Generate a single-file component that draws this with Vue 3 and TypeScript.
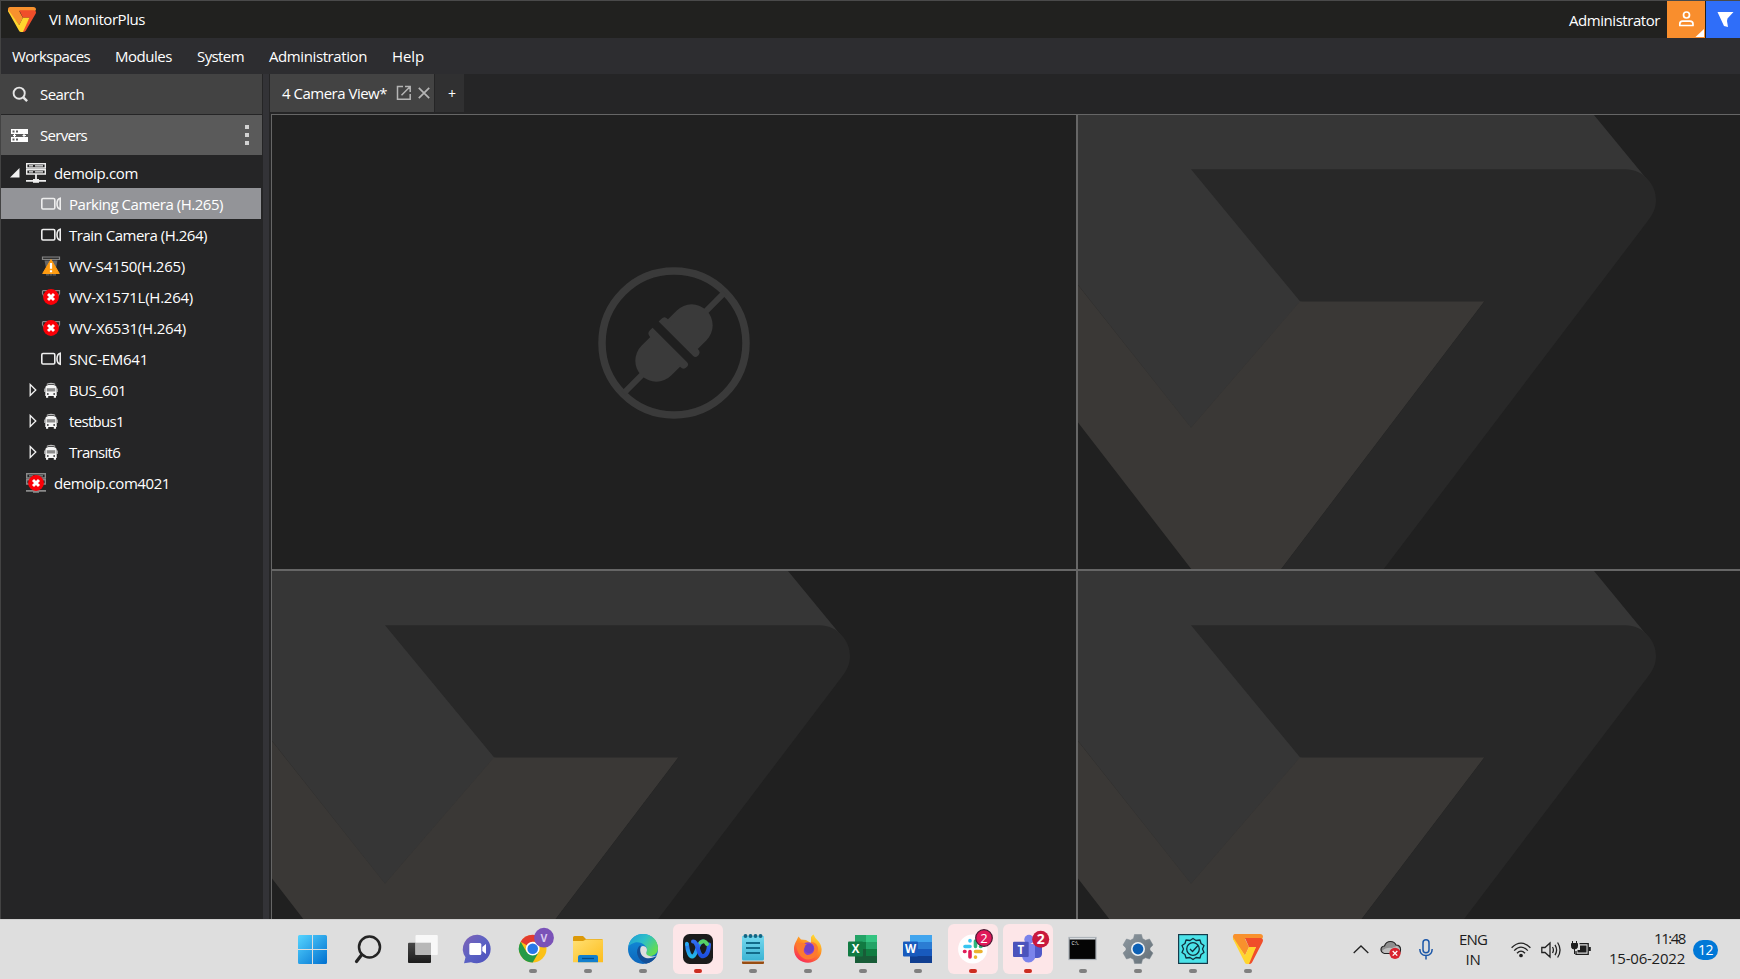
<script setup lang="ts">
interface TreeNode {
  label: string
  width: number
  icon: 'server' | 'camera' | 'warning' | 'error' | 'bus' | 'serverError'
  level: 0 | 1
  arrow?: 'open' | 'closed'
  selected?: boolean
}

interface TaskItem {
  name: string
  running?: boolean
  alert?: boolean
}

const menus = [
  { label: 'Workspaces', width: 78 },
  { label: 'Modules', width: 57 },
  { label: 'System', width: 47 },
  { label: 'Administration', width: 98 },
  { label: 'Help', width: 32 },
]

const nodes: TreeNode[] = [
  { label: 'demoip.com', width: 84, icon: 'server', level: 0, arrow: 'open' },
  { label: 'Parking Camera (H.265)', width: 154, icon: 'camera', level: 1, selected: true },
  { label: 'Train Camera (H.264)', width: 138, icon: 'camera', level: 1 },
  { label: 'WV-S4150(H.265)', width: 116, icon: 'warning', level: 1 },
  { label: 'WV-X1571L(H.264)', width: 124, icon: 'error', level: 1 },
  { label: 'WV-X6531(H.264)', width: 117, icon: 'error', level: 1 },
  { label: 'SNC-EM641', width: 79, icon: 'camera', level: 1 },
  { label: 'BUS_601', width: 57, icon: 'bus', level: 1, arrow: 'closed' },
  { label: 'testbus1', width: 55, icon: 'bus', level: 1, arrow: 'closed' },
  { label: 'Transit6', width: 51, icon: 'bus', level: 1, arrow: 'closed' },
  { label: 'demoip.com4021', width: 116, icon: 'serverError', level: 0 },
]

const tasks: TaskItem[] = [
  { name: 'start' },
  { name: 'search' },
  { name: 'taskview' },
  { name: 'chat' },
  { name: 'chrome', running: true },
  { name: 'explorer', running: true },
  { name: 'edge', running: true },
  { name: 'webex', running: true, alert: true },
  { name: 'notepad', running: true },
  { name: 'firefox', running: true },
  { name: 'excel', running: true },
  { name: 'word', running: true },
  { name: 'slack', running: true, alert: true },
  { name: 'teams', running: true, alert: true },
  { name: 'terminal', running: true },
  { name: 'settings', running: true },
  { name: 'license', running: true },
  { name: 'monitor', running: true },
]

const cells = ['disconnected', 'empty', 'empty', 'empty']

// Tracks a label so that its run of text fills the given width.
const vFit = {
  mounted(el: HTMLElement, binding: { value: number }) {
    const natural = el.getBoundingClientRect().width
    const count = (el.textContent ?? '').trim().length
    if (count > 1) el.style.letterSpacing = `${(binding.value - natural) / count}px`
  },
}
</script>

<template>
  <div class="screen">
    <div class="app">
      <header class="titlebar">
        <svg class="brand" viewBox="0 0 30 30" preserveAspectRatio="none">
          <path d="M2 0H27Q30 0 30 3L29 5H12L16 13 12 21.500 0 5Q-.5 0 2 0Z" fill="#f8912d" />
          <path d="M12 4H27.500Q31 4.500 29.600 8L19 28.500Q18 30 16 30L14 29 23 13H16Z" fill="#f04e2a" />
          <path d="M0 3L12 21.500 16 13H23L16 30H14Q12.500 30 11.800 28.500L.5 6Z" fill="#ffd52e" />
        </svg>
        <span v-fit="96" class="app-name">VI MonitorPlus</span>
        <span v-fit="91" class="user-name">Administrator</span>
        <button class="user-btn">
          <svg viewBox="0 0 38 37">
            <circle cx="19.500" cy="14" r="3" fill="none" stroke="#fff" stroke-width="1.700" />
            <path d="M12.800 24.500V23Q12.800 20.200 15.600 20.200H23Q26 20.200 26 23V24.500Z" fill="none" stroke="#fff" stroke-width="1.700" stroke-linejoin="round" />
            <path d="M37 28V36H28.500Z" fill="#fff" />
          </svg>
        </button>
        <button class="flag-btn">
          <svg viewBox="0 0 34 37"><path d="M11.500 11H27.500L21.500 17.500 21 20 22 26 18 25Z" fill="#fff" /></svg>
        </button>
      </header>

      <nav class="menubar">
        <div v-for="m in menus" :key="m.label" class="menu"><span v-fit="m.width">{{ m.label }}</span></div>
      </nav>

      <div class="body">
        <aside class="sidebar">
          <div class="search">
            <svg viewBox="0 0 18 18">
              <circle cx="7.600" cy="7.600" r="5.900" fill="none" stroke="#e6e6e6" stroke-width="2" />
              <path d="M12 12L16 16" stroke="#e6e6e6" stroke-width="2.600" />
            </svg>
            <span v-fit="44">Search</span>
          </div>
          <div class="servers">
            <svg viewBox="0 0 17 15">
              <path d="M0 1H17V6H0ZM0 9H17V14H0Z" fill="#fff" />
              <path d="M1.500 2.500H3.500V4.500H1.500ZM5 2.500H7V4.500H5ZM1.500 10.500H3.500V12.500H1.500ZM5 10.500H7V12.500H5Z" fill="#5a5a5a" />
              <path d="M3.500 6V9M13 6V9M2 7.500H5M11.500 7.500H15" stroke="#fff" stroke-width="1.200" />
            </svg>
            <span v-fit="47">Servers</span>
            <i class="kebab"><b /><b /><b /></i>
          </div>
          <ul class="tree">
            <li v-for="n in nodes" :key="n.label" class="node" :class="[`level-${n.level}`, { selected: n.selected }]">
              <span class="arrow">
                <svg v-if="n.arrow === 'open'" viewBox="0 0 10 10"><path d="M9.500 0V9.500H0Z" fill="#f2f2f2" /></svg>
                <svg v-else-if="n.arrow === 'closed'" viewBox="0 0 8 14"><path d="M1.200 1.500L6.800 7 1.200 12.500Z" fill="none" stroke="#f2f2f2" stroke-width="1.300" /></svg>
              </span>
              <svg class="kind" viewBox="0 0 20 20">
                <g v-if="n.icon === 'camera'" fill="none" stroke="#eee" stroke-width="1.600">
                  <rect x=".8" y="4.500" width="13" height="10.500" rx="1.200" />
                  <path d="M19.200 4.300V15.200Q16 14.500 16 9.800T19.200 4.300Z" />
                </g>
                <g v-else-if="n.icon === 'server' || n.icon === 'serverError'" :opacity="n.icon === 'server' ? 1 : 0.5">
                  <path d="M.7.800H19.300V5H.7ZM.7 6.800H19.300V11H.7Z" fill="none" stroke="#eee" stroke-width="1.400" />
                  <path d="M3 2.900H7M9 2.900H17M3 8.900H7M9 8.900H17" stroke="#eee" stroke-width="1.300" />
                  <path d="M10 11V16M0 17.800H20" stroke="#eee" stroke-width="1.800" />
                  <path d="M7 16H13V19.800H7Z" fill="#eee" />
                </g>
                <g v-else-if="n.icon === 'warning'">
                  <path d="M1.500 1H18.500V3.500H1.500Z" fill="#333" stroke="#858585" stroke-width="1.200" />
                  <path d="M3.500 4.500H16.500L15 12H5Z" fill="#666" />
                  <path d="M5 18.900H15" stroke="#666" stroke-width="1.300" stroke-dasharray="3 .5" />
                  <path d="M10 3.500L18.300 17.500H1.700Z" fill="#ff9c12" stroke="#ff9c12" stroke-linejoin="round" />
                  <path d="M10 7V12.800M10 14.200V16.200" stroke="#fff" stroke-width="2.200" />
                </g>
                <g v-else-if="n.icon === 'error'">
                  <path d="M1.500 3.700H18.500V6.500L16 11M1.500 3.700V6.500L4 11" fill="none" stroke="#8a8a8a" stroke-width="1.200" />
                </g>
                <g v-else-if="n.icon === 'bus'">
                  <path d="M6 4.500Q6.500 3.300 10 3.300T14 4.500" fill="none" stroke="#bbb" stroke-width="1.200" />
                  <path d="M4.300 8Q4.300 4.800 10 4.800T15.700 8V16H15V17.800H12.800V16H7.200V17.800H5V16H4.300Z" fill="#f5f5f5" />
                  <path d="M5.800 8.200H14.200V11.500H5.800Z" fill="#8c8c8c" />
                  <path d="M3.800 8.500V12M16.200 8.500V12" stroke="#ccc" stroke-width="1" />
                  <path d="M6 13.900H7.600M12.400 13.900H14" stroke="#252526" stroke-width="1.500" />
                </g>
                <g v-if="n.icon === 'error' || n.icon === 'serverError'">
                  <circle cx="10" cy="10" r="7.900" fill="#fb0007" />
                  <path d="M7 7L13 13M13 7L7 13" stroke="#fff" stroke-width="2.900" />
                </g>
              </svg>
              <span v-fit="n.width" class="label">{{ n.label }}</span>
            </li>
          </ul>
        </aside>
        <div class="splitter" />
        <main class="workspace">
          <div class="tabs">
            <div class="tab">
              <span v-fit="105">4 Camera View*</span>
              <svg class="popout" viewBox="0 0 16 16" fill="none" stroke="#b5b5b5" stroke-width="1.500">
                <path d="M7 1.500H1.500V14.200H14.200V9M9 1.500H14.200V7M14 1.700L5.500 10.200" />
              </svg>
              <svg class="close" viewBox="0 0 12 12"><path d="M.8.800L11.200 11.200M11.200.800L.8 11.200" stroke="#b5b5b5" stroke-width="1.700" /></svg>
            </div>
            <div class="add">+</div>
          </div>
          <div class="grid">
            <div v-for="(c, i) in cells" :key="i" class="cell">
              <svg v-if="c === 'disconnected'" class="plug" viewBox="0 0 152 152">
                <circle cx="76" cy="76" r="72" fill="#1f1f1f" stroke="#3a3a3a" stroke-width="7.500" />
                <g transform="rotate(45 76 76)" fill="#3a3a3a">
                  <rect x="73" y="5" width="6" height="30" />
                  <rect x="73" y="117" width="6" height="30" />
                  <path d="M55 66V51A21 21 0 0 1 97 51V66Z" />
                  <path d="M55 86V101A21 21 0 0 0 97 101V86Z" />
                  <path d="M50 71.700V68Q50 63.500 54.500 63.500H97.500Q102 63.500 102 68V68.200Q102 71.700 98.500 71.700Z" />
                  <path d="M50 80.300V84Q50 88.500 54.500 88.500H97.500Q102 88.500 102 84V83.800Q102 80.300 98.500 80.300Z" />
                </g>
              </svg>
              <svg v-else class="watermark" viewBox="0 0 805 455">
                <path d="M0 0H516L569.500 65 540 80 222 187 113 313 0 170Z" fill="#363636" />
                <path d="M0 170L113 312.500 222 186.300H406.500L202.500 455H114L0 307.500Z" fill="#3a3836" />
                <path d="M113 54.300H547C566 54.300 578 70 578 85 578 93 575 99 570.500 105L305 455H202.500L406.500 186.300H222Z" fill="#282828" />
              </svg>
            </div>
          </div>
        </main>
      </div>
    </div>

    <footer class="taskbar">
      <div class="tasks">
        <div v-for="t in tasks" :key="t.name" class="task" :class="{ alert: t.alert, running: t.running }">
          <svg viewBox="0 0 50 50">
            <defs v-if="t.name === 'start'">
              <linearGradient id="gWin" gradientUnits="userSpaceOnUse" x1="11" y1="11" x2="39" y2="40"><stop offset="0" stop-color="#55d4ff" /><stop offset="1" stop-color="#0070d0" /></linearGradient>
              <linearGradient id="gDark" x1="0" y1="0" x2="0" y2="1"><stop offset="0" stop-color="#484848" /><stop offset="1" stop-color="#1c1c1c" /></linearGradient>
              <linearGradient id="gChat" x1="0" y1="0" x2="1" y2="1"><stop offset="0" stop-color="#8262b5" /><stop offset=".5" stop-color="#5b62c4" /><stop offset="1" stop-color="#4d50bc" /></linearGradient>
              <linearGradient id="gFold" x1="0" y1="0" x2="1" y2="1"><stop offset="0" stop-color="#ffe073" /><stop offset="1" stop-color="#fdbd1c" /></linearGradient>
              <linearGradient id="gEdge" x1="0" y1="0" x2="1" y2=".6"><stop offset="0" stop-color="#1d9bd8" /><stop offset=".5" stop-color="#2dbfc8" /><stop offset="1" stop-color="#63dc52" /></linearGradient>
              <linearGradient id="gEdgeB" x1="0" y1="0" x2="0" y2="1"><stop offset="0" stop-color="#1291dc" /><stop offset="1" stop-color="#0d65bb" /></linearGradient>
              <linearGradient id="gNote" x1="0" y1="0" x2="0" y2="1"><stop offset="0" stop-color="#75d8ee" /><stop offset="1" stop-color="#3bb4d4" /></linearGradient>
              <linearGradient id="gFox" x1=".8" y1="0" x2=".2" y2="1"><stop offset="0" stop-color="#ffe434" /><stop offset=".45" stop-color="#ff8a21" /><stop offset="1" stop-color="#f8235e" /></linearGradient>
              <linearGradient id="gWebA" x1="0" y1="0" x2="0" y2="1"><stop offset="0" stop-color="#2b62f5" /><stop offset="1" stop-color="#22b7e8" /></linearGradient>
              <linearGradient id="gWebB" x1="0" y1="0" x2="0" y2="1"><stop offset="0" stop-color="#2f6bf0" /><stop offset="1" stop-color="#1d4fe0" /></linearGradient>
              <linearGradient id="gGear" x1="0" y1="0" x2="1" y2="1"><stop offset="0" stop-color="#8d98a0" /><stop offset="1" stop-color="#646f77" /></linearGradient>
            </defs>

            <path v-if="t.name === 'start'" d="M12 11H24.500V25H10.500V12.500Q10.500 11 12 11ZM25.500 11H38Q39.500 11 39.500 12.500V25H25.500ZM10.500 26H24.500V40H12Q10.500 40 10.500 38.500ZM25.500 26H39.500V38.500Q39.500 40 38 40H25.500Z" fill="url(#gWin)" transform="translate(-.5 0)" />
            <g v-else-if="t.name === 'search'" fill="none" stroke="#242424" stroke-linecap="round">
              <circle cx="26.500" cy="23" r="10.500" stroke-width="2.500" />
              <path d="M18.500 31L13.500 37.500" stroke-width="3.200" />
            </g>
            <g v-else-if="t.name === 'taskview'">
              <rect x="10" y="18.700" width="23" height="20.300" rx="1" fill="url(#gDark)" />
              <rect x="17.500" y="11" width="22.300" height="20" rx="1" fill="#f8f8f8" />
              <rect x="17.500" y="18.700" width="15.500" height="12.300" fill="#b8b8b8" />
            </g>
            <g v-else-if="t.name === 'chat'">
              <path d="M24.500 10.700A14.300 14.300 0 1 1 18 38.200L11 39.300 12.500 33.200A14.300 14.300 0 0 1 24.500 10.700Z" fill="url(#gChat)" />
              <rect x="16.300" y="19" width="12" height="12" rx="1.500" fill="#fff" />
              <path d="M29.300 23L33 20V30L29.300 27Z" fill="#fff" />
            </g>
            <g v-else-if="t.name === 'chrome'">
              <circle cx="24.700" cy="24.700" r="13.800" fill="#fbc116" />
              <path d="M24.700 24.700L12.700 17.800A13.800 13.800 0 0 1 36.700 17.800Z" fill="#e33b2e" />
              <path d="M24.700 17.800L36.700 17.800 30.700 28.200Z" fill="#fbc116" />
              <path d="M12.700 17.800A13.800 13.800 0 0 0 24.700 38.500L30.700 28.200 18.700 28.200Z" fill="#249a47" />
              <circle cx="24.700" cy="24.700" r="6.900" fill="#fff" />
              <circle cx="24.700" cy="24.700" r="5.300" fill="#2878e8" />
              <circle cx="36" cy="13.700" r="9.900" fill="#7a52b8" />
              <text x="36" y="17.500" class="glyph bold tint" font-size="10.500">V</text>
            </g>
            <g v-else-if="t.name === 'explorer'">
              <path d="M10 20V13.500Q10 12 11.500 12H20L23 15H38.500Q40 15 40 16.500V20Z" fill="#dc9908" />
              <path d="M10 17H20L23 15.500H40V38.300H10Z" fill="url(#gFold)" />
              <path d="M15 38.300V33Q15 31 17 31H33Q35 31 35 33V38.300Z" fill="#127fcd" />
              <path d="M19 34.500H31" stroke="#074d88" stroke-width="1.300" />
            </g>
            <g v-else-if="t.name === 'edge'">
              <circle cx="25" cy="25" r="15" fill="url(#gEdgeB)" />
              <path d="M10.500 22C12 14 18 10 25 10 34 10 40 16.500 40 24 40 29.500 36 32 32 32 28.500 32 27 30 28.500 28 31 22 23 17 17 18.500Q13 19.500 10.500 22Z" fill="url(#gEdge)" />
              <path d="M22.500 21C16 26 19 36 28 39.700 32.500 39 36.500 36 38.600 32 29 37 21.500 30 22.500 21Z" fill="#134f97" />
              <path d="M28.500 28C30 25 28 22 25 22 21.500 22 21.500 28 24 31.500 28 36 35 34.500 38.500 31.800Q34 33.500 30 31.500 27.500 30 28.500 28Z" fill="#dedede" />
            </g>
            <g v-else-if="t.name === 'webex'">
              <rect x="10" y="10" width="30" height="30" rx="6.500" fill="#1b1b1b" />
              <path d="M14 20.500C14.500 28 17 33.500 20 32.300 24 30.500 24.500 18 29.500 17.500" fill="none" stroke="url(#gWebA)" stroke-width="4" stroke-linecap="round" />
              <path d="M20 17.500C25.500 17.500 24.500 32.300 30 32.300 33.500 32 35.700 27 36 20.500" fill="none" stroke="url(#gWebB)" stroke-width="4" stroke-linecap="round" />
              <path d="M27.500 18.500Q31.500 15.500 34 20" fill="none" stroke="#55d268" stroke-width="4" stroke-linecap="round" />
              <path d="M13.800 20.500V19.500" stroke="#28a9ef" stroke-width="3.600" stroke-linecap="round" />
            </g>
            <g v-else-if="t.name === 'notepad'">
              <path d="M14 37.500H36V39Q36 40 35 40H15Q14 40 14 39Z" fill="#984d12" />
              <path d="M14 12H36V35Q36 36.500 34.500 36.500H15.500Q14 36.500 14 35Z" fill="url(#gNote)" />
              <path d="M17.500 12H34.500" stroke="#126583" stroke-width="4" stroke-dasharray="0 5" stroke-linecap="round" />
              <path d="M18 19H32M18 24H32M18 29H32" stroke="#126b8a" stroke-width="2" />
            </g>
            <g v-else-if="t.name === 'firefox'">
              <path d="M28 13Q30 10 30.500 10.500 32 14.500 36 18 39 22 38.500 27C38 34 32 38.700 25 38.700S11 34 11 25C11 20 13 18 14.500 14.500L15.500 12.500 18 15.500 23 16 28 19Z" fill="url(#gFox)" />
              <circle cx="25" cy="25" r="6.800" fill="#8a42cf" />
              <path d="M13 20Q20 17 24 21L27 22Q25 24.500 21 24.500 20 29 24 31 31 31 31.500 24 31 20 27.500 18 35 18 35 26 34 35 25 35.500 15 35 13 20Z" fill="#fd7930" />
              <circle cx="26" cy="24.500" r="4.600" fill="#7440c4" />
            </g>
            <g v-else-if="t.name === 'excel'">
              <path d="M17 11H28V18H17Z" fill="#23a366" /><path d="M28 11H39V18H28Z" fill="#34c481" />
              <path d="M17 18H28V25H17Z" fill="#117a42" /><path d="M28 18H39V25H28Z" fill="#23a366" />
              <path d="M17 25H28V39H17Z" fill="#185c37" /><path d="M28 25H39V32H28Z" fill="#107c41" /><path d="M28 32H39V39H28Z" fill="#185c37" />
              <rect x="10" y="17.500" width="15" height="15" rx="1" fill="#117a42" />
              <text x="17.500" y="29" class="glyph bold" font-size="11.500">X</text>
            </g>
            <g v-else-if="t.name === 'word'">
              <path d="M17 11H39V18H17Z" fill="#41a5ee" /><path d="M17 18H39V25H17Z" fill="#2b7cd3" />
              <path d="M17 25H39V32H17Z" fill="#185abd" /><path d="M17 32H39V39H17Z" fill="#103f91" />
              <rect x="10" y="17.500" width="15" height="15" rx="1" fill="#185abd" />
              <text x="17.500" y="29" class="glyph bold" font-size="11.500">W</text>
            </g>
            <g v-else-if="t.name === 'slack'">
              <circle cx="24.700" cy="25" r="14.600" fill="#fff" />
              <g fill="none" stroke-width="3.600" stroke-linecap="round">
                <path d="M17 22.500H22M22 16.500V17" stroke="#36c5f0" />
                <path d="M27.500 17V22.500M32.500 22.500H33" stroke="#2eb67d" />
                <path d="M27.500 27.500H33M27.500 33V33.200" stroke="#ecb22e" />
                <path d="M22 27.500V33M16.500 27.500H17" stroke="#e01e5a" />
              </g>
              <circle cx="36" cy="14" r="8.300" fill="#e0195a" stroke="#4b1731" stroke-width="1.200" />
              <text x="36" y="18.600" class="glyph" font-size="13">2</text>
            </g>
            <g v-else-if="t.name === 'teams'">
              <circle cx="26" cy="15.500" r="4.700" fill="#7b83eb" />
              <path d="M19 20H33V30Q32 38.500 25.500 38.500T19 30Z" fill="#7b83eb" />
              <path d="M32 21H39V30Q38.500 34 34.500 34H32Z" fill="#5059c9" />
              <rect x="10" y="17.700" width="15.700" height="15.300" rx="1" fill="#4b53bc" />
              <text x="17.800" y="29.500" class="glyph bold" font-size="11.500">T</text>
              <circle cx="37.700" cy="15.300" r="8.500" fill="#c9183c" />
              <text x="37.700" y="20.200" class="glyph bold" font-size="14">2</text>
            </g>
            <g v-else-if="t.name === 'terminal'">
              <rect x="11" y="13.500" width="27" height="22" fill="#050505" stroke="#a9b0b6" stroke-width="1.200" />
              <path d="M11.500 14.700H37.500" stroke="#d9dde0" stroke-width="1.600" />
              <text x="13.500" y="21" class="glyph start" font-size="5">C:\.</text>
            </g>
            <g v-else-if="t.name === 'settings'">
              <path d="M21.500 10.500H28.500L29.500 14.500 32.500 16.200 36.500 15 40 21 37 24V26L40 29 36.500 35 32.500 33.800 29.500 35.500 28.500 39.500H21.500L20.500 35.500 17.500 33.800 13.500 35 10 29 13 26V24L10 21 13.500 15 17.500 16.200 20.500 14.500Z" fill="url(#gGear)" stroke="#7c878f" stroke-width=".5" stroke-linejoin="round" />
              <circle cx="25" cy="25" r="7" fill="#eef2f5" />
              <circle cx="25" cy="25" r="5.400" fill="#0c60b5" />
            </g>
            <g v-else-if="t.name === 'license'">
              <rect x="10.600" y="10.600" width="28.800" height="28.800" fill="#4be3e9" stroke="#143b4b" stroke-width="1.200" />
              <g fill="none" stroke="#10303e" stroke-width="1.300" stroke-linejoin="round">
                <path d="M25 14.500L28 16.500 32 16 33 19.500 36 21.500 34.500 25 36 28.500 33 30.500 32 34 28 33.500 25 35.500 22 33.500 18 34 17 30.500 14 28.500 15.500 25 14 21.500 17 19.500 18 16 22 16.500Z" />
                <circle cx="25" cy="25" r="6.300" />
                <path d="M22 25L24.500 27.500 30 21.500" />
              </g>
            </g>
            <g v-else transform="translate(10 10)">
              <path d="M2 0H27Q30 0 30 3L29 5H12L16 13 12 21.500 0 5Q-.5 0 2 0Z" fill="#f8912d" />
              <path d="M12 4H27.500Q31 4.500 29.600 8L19 28.500Q18 30 16 30L14 29 23 13H16Z" fill="#f04e2a" />
              <path d="M0 3L12 21.500 16 13H23L16 30H14Q12.500 30 11.800 28.500L.5 6Z" fill="#ffd52e" />
            </g>
          </svg>
        </div>
      </div>

      <div class="tray">
        <svg class="chevron" viewBox="0 0 16 9"><path d="M.7 8L8 1 15.300 8" fill="none" stroke="#222" stroke-width="1.300" /></svg>
        <svg class="cloud" viewBox="0 0 22 20">
          <path d="M4.500 13.500Q1 12.500 1 9.500T4.500 6Q6 1.500 10.500 1.500 14.500 1.500 16 5 20.500 5 20.500 9.500T17 13.500Z" fill="#8f8f8f" stroke="#222" stroke-width="1.200" />
          <path d="M2 11Q6 7 12 8L17 6 20 9V13H4.500Z" fill="#bdbdbd" />
          <circle cx="15" cy="13.300" r="5.600" fill="#d9232e" />
          <path d="M12.700 11L17.300 15.600M17.300 11L12.700 15.600" stroke="#fff" stroke-width="1.300" />
        </svg>
        <svg class="mic" viewBox="0 0 14 21" fill="none" stroke="#1b57a8" stroke-width="1.500">
          <rect x="4" y=".8" width="6" height="13" rx="3" /><path d="M.8 10Q1 16.500 7 16.500T13.200 10M7 16.500V20.500" />
        </svg>
        <div class="lang"><span v-fit="28">ENG</span><span v-fit="15">IN</span></div>
        <svg class="wifi" viewBox="0 0 20 16" fill="none" stroke="#222" stroke-width="1.300">
          <path d="M.6 5.800Q10-3.500 19.400 5.800M3.200 8.600Q10 1.500 16.800 8.600M6 11.300Q10 7 14 11.300" /><circle cx="10" cy="13.500" r="1.200" fill="#222" />
        </svg>
        <svg class="sound" viewBox="0 0 20 18" fill="none" stroke="#222" stroke-width="1.300">
          <path d="M.8 6.500H4L9 2V16L4 11.500H.8ZM11.500 6Q13.300 9 11.500 12M14 3.800Q17.200 9 14 14.200M16.600 1.500Q21.500 9 16.600 16.500" />
        </svg>
        <svg class="battery" viewBox="0 0 20 17">
          <path d="M8.500 3.700H17.200V14.300H5V11" fill="none" stroke="#1d1d1d" stroke-width="1.300" />
          <path d="M9 5.500H15.500V12.500H6.500V10H9ZM17.500 7H19.800V11H17.500Z" fill="#1d1d1d" />
          <path d="M.5 3.500H6.500V6.500Q6.500 8.800 3.500 9T.5 6.500ZM1.500 1V4M5.500 1V4M3.500 8V14" fill="#1d1d1d" stroke="#1d1d1d" />
        </svg>
        <div class="clock"><span v-fit="31">11:48</span><span v-fit="76">15-06-2022</span></div>
        <span class="count">12</span>
      </div>
    </footer>
  </div>
</template>

<style>
body {
  margin: 0;
  background: #252526;
}
</style>

<style scoped>
.screen {
  width: 1740px;
  height: 979px;
  display: flex;
  flex-direction: column;
  overflow: hidden;
  font-family: "Open Sans", "Noto Sans", sans-serif;
  font-size: 15px;
  line-height: 20px;
  color: #fff;
}
.screen svg { display: block; flex: none; }
.screen span { white-space: nowrap; }
.app {
  box-sizing: border-box;
  height: 919px;
  flex: none;
  display: flex;
  flex-direction: column;
  border-top: 1px solid #4a4a4a;
  border-left: 1px solid #434343;
  background: #252526;
  overflow: hidden;
}
.titlebar {
  height: 37px;
  flex: none;
  display: flex;
  align-items: center;
  background: #21211f;
}
.brand { width: 28px; height: 25px; margin: 0 13px 0 7px; }
.app-name { margin-top: -1px; }
.user-name { margin: 0 7px 0 auto; }
.user-btn, .flag-btn { height: 37px; border: 0; padding: 0; }
.user-btn { width: 38px; margin-right: 1px; background: #f98e2d; }
.flag-btn { width: 34px; background: #2f6ef9; }
.menubar {
  height: 36px;
  flex: none;
  display: flex;
  align-items: center;
  gap: 25px;
  padding-left: 11px;
  background: #2d2d30;
}
.menu { display: flex; }
.body { flex: 1; display: flex; min-height: 0; }
.sidebar { width: 261px; flex: none; display: flex; flex-direction: column; }
.search, .servers {
  height: 40px;
  flex: none;
  display: flex;
  align-items: center;
  padding-left: 10px;
  gap: 12px;
  background: #434343;
}
.search { margin-bottom: 1px; padding-left: 11px; gap: 11px; }
.search svg { width: 17px; height: 17px; }
.servers { background: #5a5a5a; }
.servers svg { width: 17px; height: 15px; }
.kebab { margin: 0 13px 0 auto; display: grid; gap: 4px; }
.kebab b { width: 4px; height: 4px; background: #d2d2d2; }
.tree { list-style: none; margin: 0; padding: 2px 0 0; }
.node { height: 31px; display: flex; align-items: center; width: 260px; }
.node.selected { background: #939498; }
.level-0 { --indent: 9px; --arrow: 16px; }
.level-1 { --indent: 28px; --arrow: 12px; }
.arrow { width: var(--arrow); margin-left: var(--indent); padding-top: 1px; }
.level-0 .arrow svg { width: 10px; height: 10px; }
.level-1 .arrow svg { width: 8px; height: 14px; }
.kind { width: 20px; height: 20px; margin: 1px 8px 0 0; }
.splitter {
  width: 6px;
  flex: none;
  margin: 0 1px;
  background: #333337;
}
.workspace { flex: 1; min-width: 0; display: flex; flex-direction: column; }
.tabs { height: 40px; flex: none; display: flex; gap: 1px; }
.tab {
  width: 164px;
  height: 38px;
  display: flex;
  align-items: center;
  box-sizing: border-box;
  padding-left: 12px;
  background: #434343;
}
.popout { width: 16px; height: 16px; margin: 0 6px 0 9px; }
.close { width: 12px; height: 12px; }
.add {
  width: 29px;
  height: 38px;
  line-height: 40px;
  text-align: center;
  font-size: 14px;
  background: #303031;
  padding-left: 5px;
  box-sizing: border-box;
}
.grid {
  flex: none;
  margin-left: 1px;
  height: 914px;
  display: grid;
  grid-template-columns: 804px 804px;
  grid-template-rows: 454px 454px;
  gap: 2px;
  padding: 1px 0 0 1px;
  background: #666;
}
.cell { background: #202020; overflow: hidden; display: flex; justify-content: center; align-items: center; }
.watermark { width: 805px; height: 455px; align-self: flex-start; }
.plug { width: 152px; height: 152px; margin-top: 1px; }
.taskbar {
  height: 60px;
  flex: none;
  box-sizing: border-box;
  display: flex;
  align-items: flex-start;
  border-top: 1px solid #cfcfcf;
  background: #dedede;
  color: #1c1c1c;
}
.tasks { display: flex; gap: 5px; margin-left: 288px; padding-top: 4px; flex: none; }
.task { position: relative; width: 50px; height: 50px; border-radius: 6px; }
.task svg { width: 50px; height: 50px; overflow: visible; }
.task.alert { background: #fde6e8; }
.task.running::after {
  content: "";
  position: absolute;
  left: 21px;
  bottom: 1px;
  width: 8px;
  height: 4px;
  border-radius: 2px;
  background: #808080;
}
.task.alert::after { background: #cc2d20; }
.glyph { font-family: "Open Sans", sans-serif; text-anchor: middle; fill: #fff; }
.glyph.bold { font-weight: 700; }
.glyph.tint { fill: #d9c8f0; }
.glyph.start { text-anchor: start; }
.tray { display: flex; align-items: center; height: 59px; margin-left: 80px; }
.chevron { width: 16px; height: 9px; }
.cloud { width: 22px; height: 20px; margin-left: 11px; }
.mic { width: 14px; height: 21px; margin-left: 17px; }
.lang { width: 40px; margin-left: 20px; display: flex; flex-direction: column; align-items: center; margin-top: -2px; }
.wifi { width: 20px; height: 16px; margin-left: 18px; }
.sound { width: 20px; height: 18px; margin-left: 10px; }
.battery { width: 20px; height: 17px; margin-left: 10px; margin-top: -2px; }
.clock { width: 84px; margin-left: 10px; display: flex; flex-direction: column; align-items: flex-end; margin-top: -4px; }
.count {
  width: 25px;
  height: 20px;
  margin-left: 8px;
  border-radius: 10px;
  background: #0078d7;
  color: #fff;
  font-size: 14px;
  letter-spacing: -0.5px;
  text-align: center;
}
</style>
